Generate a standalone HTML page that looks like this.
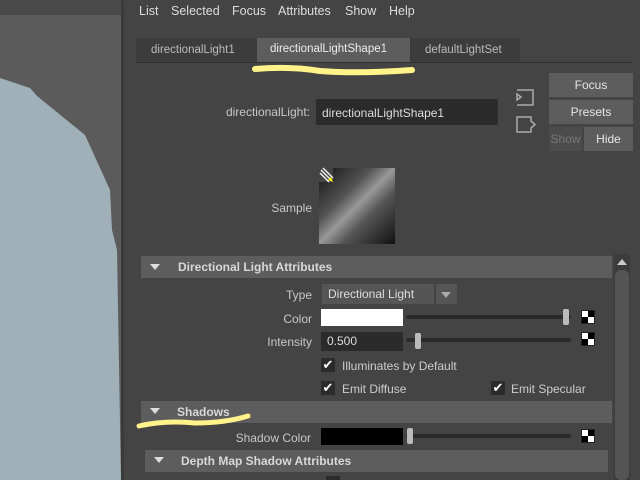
<!DOCTYPE html><html><head><style>
body{margin:0;width:640px;height:480px;overflow:hidden;background:#444;font-family:"Liberation Sans",sans-serif;font-size:12px;color:#ccc;position:relative}
.a{position:absolute}
.btn{position:absolute;background:#5d5d5d;color:#e6e6e6;text-align:center;line-height:24px;font-size:12px}
.lbl{position:absolute;text-align:right;color:#c8c8c8}
.hdr{position:absolute;background:#5d5d5d;font-weight:bold;color:#d8d8d8;line-height:22px}
.tri{position:absolute;width:0;height:0;border-left:5px solid transparent;border-right:5px solid transparent;border-top:6px solid #ddd}
.trk{position:absolute;height:4px;background:#2a2a2a;border-radius:2px}
.hdl{position:absolute;width:6px;height:16px;background:#bbb;border-radius:2px}
.chk{position:absolute;width:12px;height:12px;background:#fff;border:1px solid #222}
.chk:before,.chk:after{content:"";position:absolute;width:6px;height:6px;background:#000}
.chk:before{right:0;top:0}.chk:after{left:0;bottom:0}
.cb{position:absolute;width:14px;height:14px;background:#2b2b2b;color:#fff;font-size:13px;line-height:14px;text-align:center}
.m{position:absolute;top:4px;color:#ddd;font-size:12.5px}
</style></head><body>
<div class="a" style="left:0;top:0;width:121px;height:480px;background:#5b5b5b"></div>
<div class="a" style="left:0;top:0;width:121px;height:15px;background:#4a4a4a"></div>
<svg class="a" style="left:0;top:0" width="122" height="480"><polygon points="0,78 30,88 37,96 85,135 110,190 112,230 117,250 121,480 0,480" fill="#a0b0b9"/></svg>
<div class="a" style="left:121px;top:0;width:3px;height:480px;background:#3a3a3a"></div>
<div class="m" style="left:139px">List</div><div class="m" style="left:171px">Selected</div><div class="m" style="left:232px">Focus</div><div class="m" style="left:278px">Attributes</div><div class="m" style="left:345px">Show</div><div class="m" style="left:389px">Help</div>
<div class="a" style="left:136px;top:38px;width:384px;height:24px;background:#3c3c3c"></div>
<div class="a" style="left:136px;top:62px;width:496px;height:1px;background:#2e2e2e"></div>
<div class="a" style="left:151px;top:44px;color:#bbb;font-size:11.5px">directionalLight1</div>
<div class="a" style="left:257px;top:38px;width:153px;height:24px;background:#5d5d5d"></div>
<div class="a" style="left:270px;top:43px;color:#eee;font-size:11.5px">directionalLightShape1</div>
<div class="a" style="left:425px;top:44px;color:#bbb;font-size:11.5px">defaultLightSet</div>
<div class="lbl" style="left:200px;top:105px;width:110px">directionalLight:</div>
<div class="a" style="left:316px;top:99px;width:182px;height:26px;background:#2b2b2b;border-radius:2px"></div>
<div class="a" style="left:322px;top:106px;color:#ddd">directionalLightShape1</div>
<div class="btn" style="left:549px;top:73px;width:84px">Focus</div>
<div class="btn" style="left:549px;top:100px;width:84px">Presets</div>
<div class="btn" style="left:549px;top:127px;width:33px;background:#4c4c4c;color:#777">Show</div>
<div class="btn" style="left:584px;top:127px;width:49px">Hide</div>
<div class="lbl" style="left:240px;top:201px;width:72px">Sample</div>
<div class="a" style="left:319px;top:168px;width:76px;height:76px;background:linear-gradient(135deg,#111 0%,#555 35%,#999 50%,#555 65%,#111 100%)"></div>
<div class="a" style="left:319px;top:168px;width:14px;height:14px;background:#444"></div>
<svg class="a" style="left:319px;top:167px" width="16" height="16"><path d="M2,3l10,10M4,1l10,10M1,6l9,9" stroke="#eee" stroke-width="1.5"/><path d="M9,13l5,2-2,-5z" fill="#ff0"/></svg>
<div class="a" style="left:614px;top:254px;width:16px;height:226px;background:#3c3c3c"></div>
<div class="a" style="left:615px;top:270px;width:14px;height:210px;background:#555;border-radius:6px"></div>
<div class="tri" style="left:617px;top:259px;border-top:none;border-bottom:6px solid #ccc"></div>
<div class="hdr" style="left:141px;top:256px;width:471px;height:22px"><span style="margin-left:37px">Directional Light Attributes</span></div>
<div class="tri" style="left:150px;top:264px"></div>
<div class="lbl" style="left:240px;top:288px;width:72px">Type</div>
<div class="a" style="left:322px;top:284px;width:112px;height:20px;background:#555;line-height:20px;padding-left:6px;color:#ddd;box-sizing:border-box">Directional Light</div>
<div class="a" style="left:436px;top:284px;width:21px;height:20px;background:#555"></div>
<div class="tri" style="left:441px;top:292px;border-top-color:#aaa"></div>
<div class="lbl" style="left:240px;top:312px;width:72px">Color</div>
<div class="a" style="left:321px;top:309px;width:82px;height:17px;background:#fff"></div>
<div class="trk" style="left:406px;top:315px;width:165px"></div><div class="hdl" style="left:563px;top:309px"></div><div class="chk" style="left:581px;top:310px"></div>
<div class="lbl" style="left:240px;top:335px;width:72px">Intensity</div>
<div class="a" style="left:321px;top:332px;width:82px;height:19px;background:#2b2b2b;line-height:19px;padding-left:6px;box-sizing:border-box;color:#ddd">0.500</div>
<div class="trk" style="left:406px;top:338px;width:165px"></div><div class="hdl" style="left:415px;top:333px"></div><div class="chk" style="left:581px;top:332px"></div>
<div class="cb" style="left:321px;top:358px">✔</div><div class="a" style="left:342px;top:359px">Illuminates by Default</div>
<div class="cb" style="left:321px;top:381px">✔</div><div class="a" style="left:342px;top:382px">Emit Diffuse</div>
<div class="cb" style="left:491px;top:381px">✔</div><div class="a" style="left:511px;top:382px">Emit Specular</div>
<div class="hdr" style="left:141px;top:401px;width:471px;height:22px"><span style="margin-left:36px">Shadows</span></div>
<div class="tri" style="left:150px;top:408px"></div>
<div class="lbl" style="left:200px;top:431px;width:111px">Shadow Color</div>
<div class="a" style="left:321px;top:428px;width:82px;height:17px;background:#000"></div>
<div class="trk" style="left:406px;top:434px;width:165px"></div><div class="hdl" style="left:407px;top:428px"></div><div class="chk" style="left:581px;top:429px"></div>
<div class="hdr" style="left:145px;top:450px;width:463px;height:22px"><span style="margin-left:36px">Depth Map Shadow Attributes</span></div>
<div class="tri" style="left:154px;top:457px"></div>
<div class="a" style="left:326px;top:476px;width:14px;height:4px;background:#2b2b2b"></div>
<svg class="a" style="left:0;top:0" width="640" height="480">
<path d="M255,69 Q290,66 320,71 Q360,74 412,70" stroke="#fff38a" stroke-width="6" fill="none" stroke-linecap="round"/>
<path d="M139,426 Q165,420 195,423 Q225,423 248,416" stroke="#fff38a" stroke-width="5" fill="none" stroke-linecap="round"/>
<path d="M517,90h16v15h-16M517,94l4,3-4,3z" stroke="#aaa" stroke-width="1.5" fill="none"/>
<path d="M517,117v15h14v-4l4,-3.5-4,-3.5v-4z" stroke="#aaa" stroke-width="1.5" fill="none"/>
</svg>
</body></html>
